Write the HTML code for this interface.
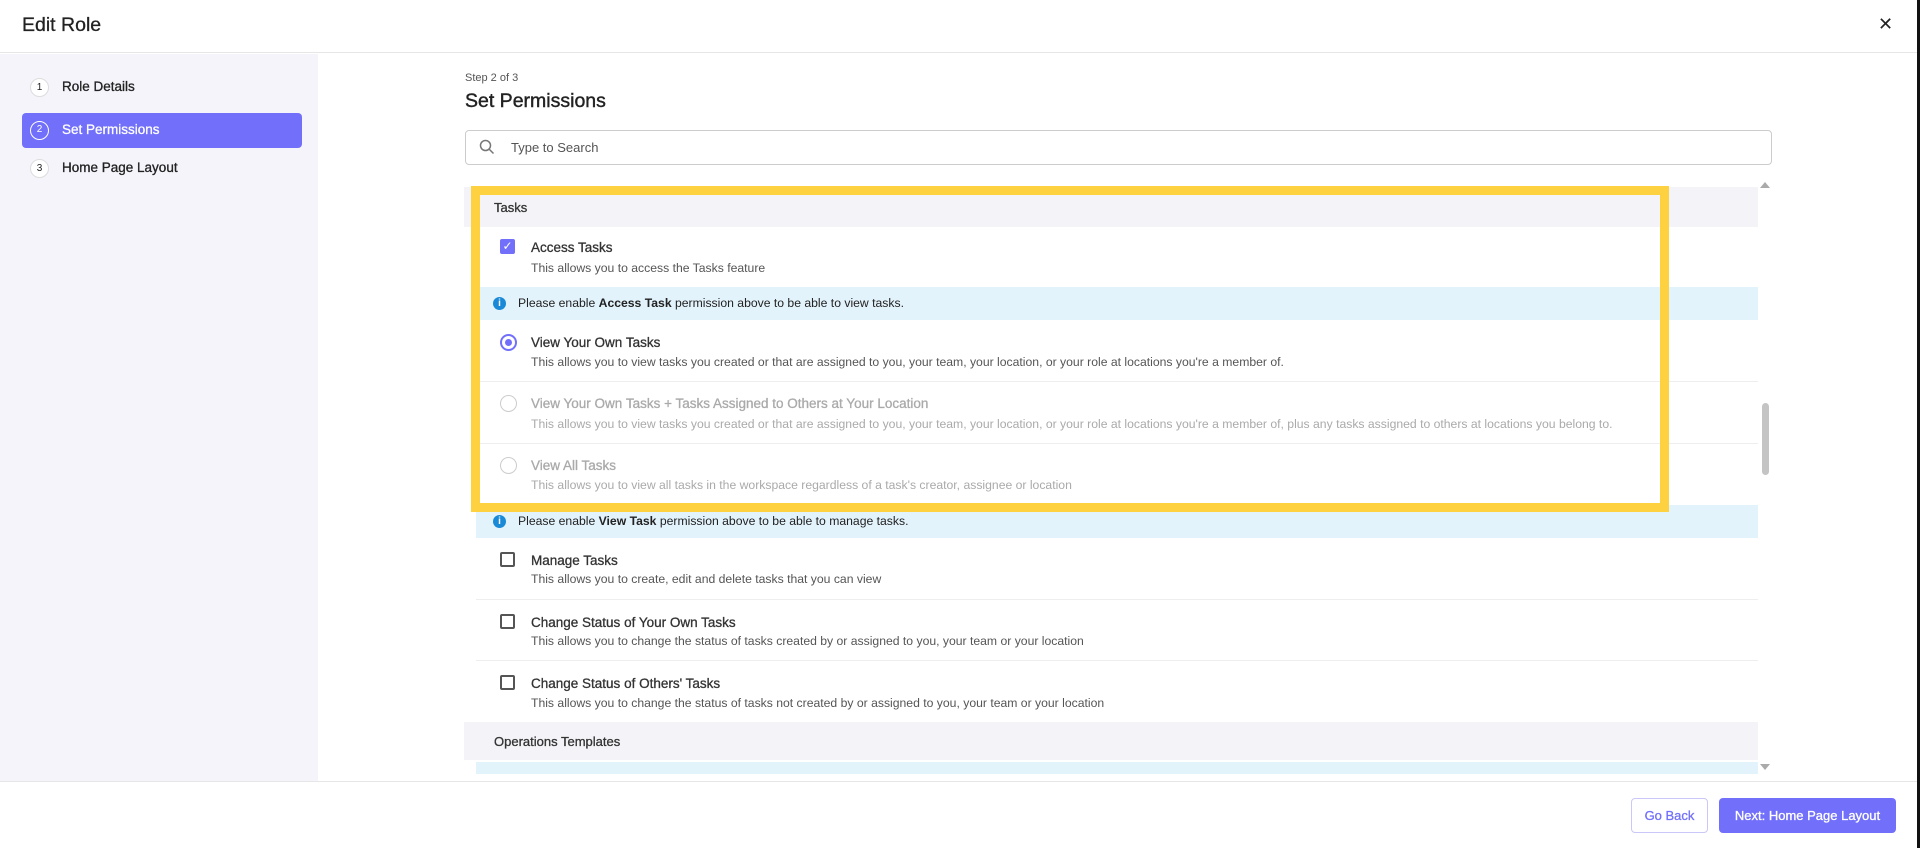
<!DOCTYPE html>
<html><head><meta charset="utf-8"><style>
*{box-sizing:border-box;margin:0;padding:0}
body{width:1920px;height:848px;position:relative;overflow:hidden;background:#fff;font-family:"Liberation Sans",sans-serif;color:#222}
.a{position:absolute}
.t{font-size:13.5px;color:#333;white-space:nowrap;-webkit-text-stroke:0.3px}
.d{font-size:12.2px;color:#555;white-space:nowrap}
.g{color:#aaa}
.cb{width:15px;height:15px;border:2px solid #555;border-radius:2px}
.rd{width:17px;height:17px;border:1.5px solid #ccc;border-radius:50%}
.info{background:#e3f3fc;left:476px;width:1282px}
.ic{width:13px;height:13px;border-radius:50%;background:#1a8ad6;color:#fff;font-size:10px;font-weight:bold;text-align:center;line-height:13px}
.hr{height:1px;background:#eee;left:476px;width:1282px}
</style></head><body>
<div class="a" style="left:0;top:0;width:1920px;height:53px;border-bottom:1px solid #e6e6e6"></div>
<div class="a" style="left:22px;top:14px;font-size:19.5px;color:#222;-webkit-text-stroke:0.3px">Edit Role</div>
<div class="a" style="left:1878px;top:14px;font-size:18px;color:#222">✕</div>
<div class="a" style="left:0;top:54px;width:318px;height:728px;background:#f4f4fa"></div>
<div class="a" style="left:30px;top:78px;width:19px;height:19px;border-radius:50%;background:#fff;border:1px solid #ddd;font-size:10px;text-align:center;line-height:17px">1</div>
<div class="a t" style="left:62px;top:79px;color:#222">Role Details</div>
<div class="a" style="left:22px;top:113px;width:280px;height:35px;background:#7270fb;border-radius:4px"></div>
<div class="a" style="left:30px;top:121px;width:19px;height:19px;border-radius:50%;border:1.5px solid #fff;color:#fff;font-size:10px;text-align:center;line-height:16px">2</div>
<div class="a t" style="left:62px;top:122px;color:#fff">Set Permissions</div>
<div class="a" style="left:30px;top:159px;width:19px;height:19px;border-radius:50%;background:#fff;border:1px solid #ddd;font-size:10px;text-align:center;line-height:17px">3</div>
<div class="a t" style="left:62px;top:160px;color:#222">Home Page Layout</div>

<div class="a" style="left:465px;top:72px;font-size:11px;color:#555">Step 2 of 3</div>
<div class="a" style="left:465px;top:90px;font-size:19.5px;color:#222;-webkit-text-stroke:0.4px">Set Permissions</div>
<div class="a" style="left:465px;top:130px;width:1307px;height:35px;border:1px solid #ccc;border-radius:4px"></div>
<svg class="a" style="left:479px;top:139px" width="16" height="16" viewBox="0 0 16 16"><circle cx="6.5" cy="6.5" r="5" fill="none" stroke="#777" stroke-width="1.5"/><path d="M10 10l4.5 4.5" stroke="#777" stroke-width="1.5"/></svg>
<div class="a" style="left:511px;top:140px;font-size:13px;color:#555">Type to Search</div>

<div class="a" style="left:464px;top:187px;width:1294px;height:40px;background:#f4f4f8"></div>
<div class="a t" style="left:494px;top:200px;font-size:13px;color:#333">Tasks</div>
<div class="a" style="left:500px;top:239px;width:15px;height:15px;background:#7270fb;border-radius:2px;color:#fff;font-size:12px;text-align:center;line-height:15px">✓</div>
<div class="a t" style="left:531px;top:240px">Access Tasks</div>
<div class="a d" style="left:531px;top:261px">This allows you to access the Tasks feature</div>
<div class="a info" style="top:287px;height:33px"></div>
<div class="a ic" style="left:493px;top:297px">i</div>
<div class="a d" style="left:518px;top:296px;color:#222">Please enable <b>Access Task</b> permission above to be able to view tasks.</div>
<div class="a rd" style="left:500px;top:334px;border:2px solid #7270fb"><div style="width:7px;height:7px;border-radius:50%;background:#7270fb;margin:3px"></div></div>
<div class="a t" style="left:531px;top:335px">View Your Own Tasks</div>
<div class="a d" style="left:531px;top:355px">This allows you to view tasks you created or that are assigned to you, your team, your location, or your role at locations you're a member of.</div>
<div class="a hr" style="top:381px"></div>
<div class="a rd" style="left:500px;top:395px"></div>
<div class="a t g" style="left:531px;top:396px">View Your Own Tasks + Tasks Assigned to Others at Your Location</div>
<div class="a d g" style="left:531px;top:417px">This allows you to view tasks you created or that are assigned to you, your team, your location, or your role at locations you're a member of, plus any tasks assigned to others at locations you belong to.</div>
<div class="a hr" style="top:443px"></div>
<div class="a rd" style="left:500px;top:457px"></div>
<div class="a t g" style="left:531px;top:458px">View All Tasks</div>
<div class="a d g" style="left:531px;top:478px">This allows you to view all tasks in the workspace regardless of a task's creator, assignee or location</div>
<div class="a info" style="top:505px;height:33px"></div>
<div class="a ic" style="left:493px;top:515px">i</div>
<div class="a d" style="left:518px;top:514px;color:#222">Please enable <b>View Task</b> permission above to be able to manage tasks.</div>
<div class="a cb" style="left:500px;top:552px"></div>
<div class="a t" style="left:531px;top:553px">Manage Tasks</div>
<div class="a d" style="left:531px;top:572px">This allows you to create, edit and delete tasks that you can view</div>
<div class="a hr" style="top:599px"></div>
<div class="a cb" style="left:500px;top:614px"></div>
<div class="a t" style="left:531px;top:615px">Change Status of Your Own Tasks</div>
<div class="a d" style="left:531px;top:634px">This allows you to change the status of tasks created by or assigned to you, your team or your location</div>
<div class="a hr" style="top:660px"></div>
<div class="a cb" style="left:500px;top:675px"></div>
<div class="a t" style="left:531px;top:676px">Change Status of Others' Tasks</div>
<div class="a d" style="left:531px;top:696px">This allows you to change the status of tasks not created by or assigned to you, your team or your location</div>
<div class="a" style="left:464px;top:722px;width:1294px;height:38px;background:#f4f4f8"></div>
<div class="a t" style="left:494px;top:734px;font-size:13px;color:#333">Operations Templates</div>
<div class="a info" style="top:762px;height:12px"></div>

<div class="a" style="left:1760px;top:182px;width:0;height:0;border-left:5px solid transparent;border-right:5px solid transparent;border-bottom:6px solid #aaa"></div>
<div class="a" style="left:1762px;top:403px;width:7px;height:72px;background:#c4c4c4;border-radius:4px"></div>
<div class="a" style="left:1760px;top:764px;width:0;height:0;border-left:5px solid transparent;border-right:5px solid transparent;border-top:6px solid #aaa"></div>

<div class="a" style="left:471px;top:186px;width:1198px;height:326px;border:9px solid #fdd13f"></div>

<div class="a" style="left:0;top:781px;width:1920px;height:1px;background:#e6e6e6"></div>
<div class="a" style="left:1631px;top:798px;width:77px;height:35px;border:1px solid #c9c8f8;border-radius:4px;color:#7270fb;font-size:13px;text-align:center;line-height:33px;-webkit-text-stroke:0.3px">Go Back</div>
<div class="a" style="left:1719px;top:798px;width:177px;height:35px;background:#7270fb;border-radius:4px;color:#fff;font-size:13px;text-align:center;line-height:35px;-webkit-text-stroke:0.3px">Next: Home Page Layout</div>
<div class="a" style="left:1917px;top:0;width:3px;height:848px;background:#111"></div>
</body></html>
